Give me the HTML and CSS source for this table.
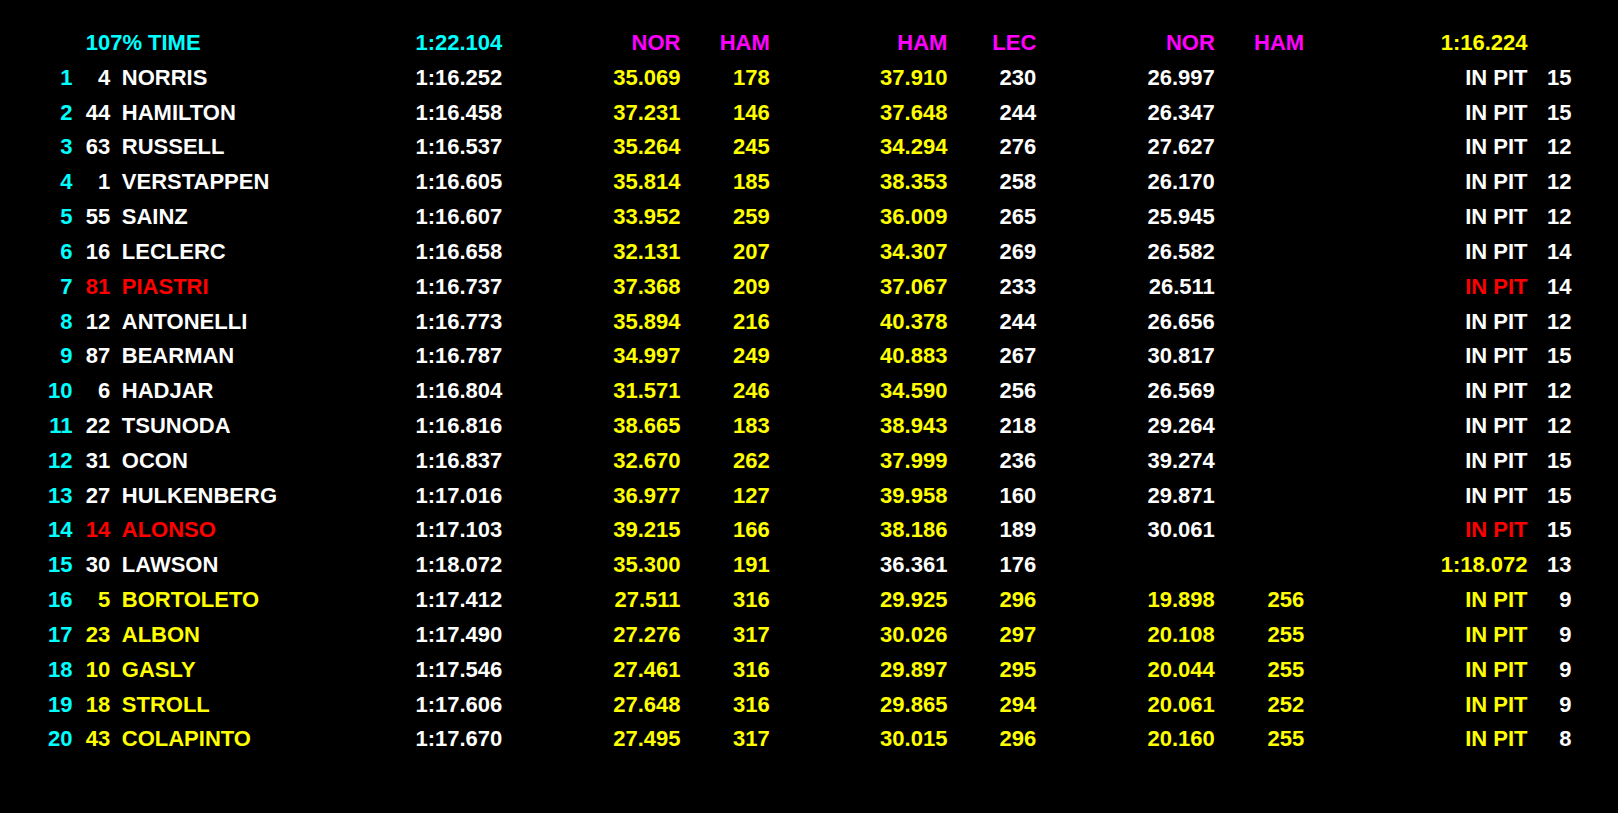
FILE: index.html
```html
<!DOCTYPE html>
<html>
<head>
<meta charset="utf-8">
<link rel="stylesheet" href="styles.css">
</head>
<body>
<div class="board">
  <div class="row head">
    <span class="label c">107% TIME</span><span class="c">1:22.104</span>
    <span class="m">NOR</span><span class="m">HAM</span><span class="m">HAM</span><span class="m">LEC</span><span class="m">NOR</span><span class="m">HAM</span><span class="y">1:16.224</span><span></span>
  </div>
  <div class="row"><span class="c">1</span><span class="w">4</span><span class="name w">NORRIS</span><span class="w">1:16.252</span><span class="y">35.069</span><span class="y">178</span><span class="y">37.910</span><span class="w">230</span><span class="w">26.997</span><span></span><span class="w">IN PIT</span><span class="w">15</span></div>
  <div class="row"><span class="c">2</span><span class="w">44</span><span class="name w">HAMILTON</span><span class="w">1:16.458</span><span class="y">37.231</span><span class="y">146</span><span class="y">37.648</span><span class="w">244</span><span class="w">26.347</span><span></span><span class="w">IN PIT</span><span class="w">15</span></div>
  <div class="row"><span class="c">3</span><span class="w">63</span><span class="name w">RUSSELL</span><span class="w">1:16.537</span><span class="y">35.264</span><span class="y">245</span><span class="y">34.294</span><span class="w">276</span><span class="w">27.627</span><span></span><span class="w">IN PIT</span><span class="w">12</span></div>
  <div class="row"><span class="c">4</span><span class="w">1</span><span class="name w">VERSTAPPEN</span><span class="w">1:16.605</span><span class="y">35.814</span><span class="y">185</span><span class="y">38.353</span><span class="w">258</span><span class="w">26.170</span><span></span><span class="w">IN PIT</span><span class="w">12</span></div>
  <div class="row"><span class="c">5</span><span class="w">55</span><span class="name w">SAINZ</span><span class="w">1:16.607</span><span class="y">33.952</span><span class="y">259</span><span class="y">36.009</span><span class="w">265</span><span class="w">25.945</span><span></span><span class="w">IN PIT</span><span class="w">12</span></div>
  <div class="row"><span class="c">6</span><span class="w">16</span><span class="name w">LECLERC</span><span class="w">1:16.658</span><span class="y">32.131</span><span class="y">207</span><span class="y">34.307</span><span class="w">269</span><span class="w">26.582</span><span></span><span class="w">IN PIT</span><span class="w">14</span></div>
  <div class="row"><span class="c">7</span><span class="r">81</span><span class="name r">PIASTRI</span><span class="w">1:16.737</span><span class="y">37.368</span><span class="y">209</span><span class="y">37.067</span><span class="w">233</span><span class="w">26.511</span><span></span><span class="r">IN PIT</span><span class="w">14</span></div>
  <div class="row"><span class="c">8</span><span class="w">12</span><span class="name w">ANTONELLI</span><span class="w">1:16.773</span><span class="y">35.894</span><span class="y">216</span><span class="y">40.378</span><span class="w">244</span><span class="w">26.656</span><span></span><span class="w">IN PIT</span><span class="w">12</span></div>
  <div class="row"><span class="c">9</span><span class="w">87</span><span class="name w">BEARMAN</span><span class="w">1:16.787</span><span class="y">34.997</span><span class="y">249</span><span class="y">40.883</span><span class="w">267</span><span class="w">30.817</span><span></span><span class="w">IN PIT</span><span class="w">15</span></div>
  <div class="row"><span class="c">10</span><span class="w">6</span><span class="name w">HADJAR</span><span class="w">1:16.804</span><span class="y">31.571</span><span class="y">246</span><span class="y">34.590</span><span class="w">256</span><span class="w">26.569</span><span></span><span class="w">IN PIT</span><span class="w">12</span></div>
  <div class="row"><span class="c">11</span><span class="w">22</span><span class="name w">TSUNODA</span><span class="w">1:16.816</span><span class="y">38.665</span><span class="y">183</span><span class="y">38.943</span><span class="w">218</span><span class="w">29.264</span><span></span><span class="w">IN PIT</span><span class="w">12</span></div>
  <div class="row"><span class="c">12</span><span class="w">31</span><span class="name w">OCON</span><span class="w">1:16.837</span><span class="y">32.670</span><span class="y">262</span><span class="y">37.999</span><span class="w">236</span><span class="w">39.274</span><span></span><span class="w">IN PIT</span><span class="w">15</span></div>
  <div class="row"><span class="c">13</span><span class="w">27</span><span class="name w">HULKENBERG</span><span class="w">1:17.016</span><span class="y">36.977</span><span class="y">127</span><span class="y">39.958</span><span class="w">160</span><span class="w">29.871</span><span></span><span class="w">IN PIT</span><span class="w">15</span></div>
  <div class="row"><span class="c">14</span><span class="r">14</span><span class="name r">ALONSO</span><span class="w">1:17.103</span><span class="y">39.215</span><span class="y">166</span><span class="y">38.186</span><span class="w">189</span><span class="w">30.061</span><span></span><span class="r">IN PIT</span><span class="w">15</span></div>
  <div class="row"><span class="c">15</span><span class="w">30</span><span class="name w">LAWSON</span><span class="w">1:18.072</span><span class="y">35.300</span><span class="y">191</span><span class="w">36.361</span><span class="w">176</span><span></span><span></span><span class="y">1:18.072</span><span class="w">13</span></div>
  <div class="row"><span class="c">16</span><span class="y">5</span><span class="name y">BORTOLETO</span><span class="w">1:17.412</span><span class="y">27.511</span><span class="y">316</span><span class="y">29.925</span><span class="y">296</span><span class="y">19.898</span><span class="y">256</span><span class="y">IN PIT</span><span class="w">9</span></div>
  <div class="row"><span class="c">17</span><span class="y">23</span><span class="name y">ALBON</span><span class="w">1:17.490</span><span class="y">27.276</span><span class="y">317</span><span class="y">30.026</span><span class="y">297</span><span class="y">20.108</span><span class="y">255</span><span class="y">IN PIT</span><span class="w">9</span></div>
  <div class="row"><span class="c">18</span><span class="y">10</span><span class="name y">GASLY</span><span class="w">1:17.546</span><span class="y">27.461</span><span class="y">316</span><span class="y">29.897</span><span class="y">295</span><span class="y">20.044</span><span class="y">255</span><span class="y">IN PIT</span><span class="w">9</span></div>
  <div class="row"><span class="c">19</span><span class="y">18</span><span class="name y">STROLL</span><span class="w">1:17.606</span><span class="y">27.648</span><span class="y">316</span><span class="y">29.865</span><span class="y">294</span><span class="y">20.061</span><span class="y">252</span><span class="y">IN PIT</span><span class="w">9</span></div>
  <div class="row"><span class="c">20</span><span class="y">43</span><span class="name y">COLAPINTO</span><span class="w">1:17.670</span><span class="y">27.495</span><span class="y">317</span><span class="y">30.015</span><span class="y">296</span><span class="y">20.160</span><span class="y">255</span><span class="y">IN PIT</span><span class="w">8</span></div>
</div>
</body>
</html>
```

FILE: styles.css
```css
html, body {
  margin: 0;
  padding: 0;
  background: #000;
}

body {
  width: 1618px;
  height: 813px;
  overflow: hidden;
  font-family: "Liberation Sans", Arial, sans-serif;
  font-weight: bold;
  font-size: 22px;
}

.board {
  padding-top: 25.9px;
}

.row {
  display: grid;
  grid-template-columns: 72.5px 37.8px 299.5px 92.5px 178.2px 89.3px 177.6px 88.9px 178.5px 89.4px 223.4px 43.9px;
  height: 34.83px;
  line-height: 34.83px;
  white-space: nowrap;
}

.row > span {
  text-align: right;
}

.row > .name {
  text-align: left;
  padding-left: 11.5px;
}

.head .label {
  grid-column: 2 / 4;
  text-align: left;
  padding-left: 13.2px;
}

.c { color: #00ffff; }
.w { color: #ffffff; }
.y { color: #ffff00; }
.m { color: #ff00ff; }
.r { color: #ff0000; }
```
